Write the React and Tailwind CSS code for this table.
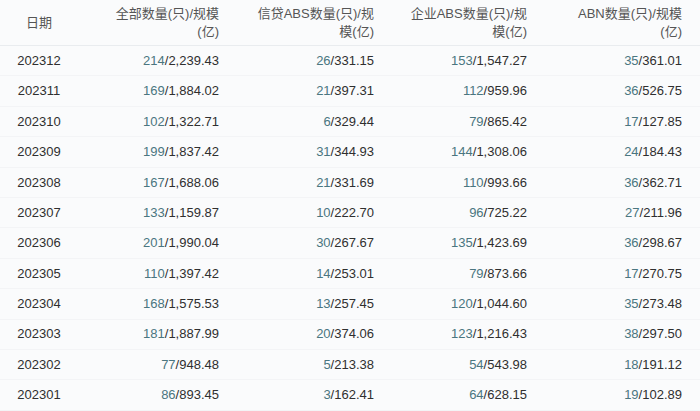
const rows = [
  ["202312", "214", "2,239.43", "26", "331.15", "153", "1,547.27", "35", "361.01"],
  ["202311", "169", "1,884.02", "21", "397.31", "112", "959.96", "36", "526.75"],
  ["202310", "102", "1,322.71", "6", "329.44", "79", "865.42", "17", "127.85"],
  ["202309", "199", "1,837.42", "31", "344.93", "144", "1,308.06", "24", "184.43"],
  ["202308", "167", "1,688.06", "21", "331.69", "110", "993.66", "36", "362.71"],
  ["202307", "133", "1,159.87", "10", "222.70", "96", "725.22", "27", "211.96"],
  ["202306", "201", "1,990.04", "30", "267.67", "135", "1,423.69", "36", "298.67"],
  ["202305", "110", "1,397.42", "14", "253.01", "79", "873.66", "17", "270.75"],
  ["202304", "168", "1,575.53", "13", "257.45", "120", "1,044.60", "35", "273.48"],
  ["202303", "181", "1,887.99", "20", "374.06", "123", "1,216.43", "38", "297.50"],
  ["202302", "77", "948.48", "5", "213.38", "54", "543.98", "18", "191.12"],
  ["202301", "86", "893.45", "3", "162.41", "64", "628.15", "19", "102.89"],
];

const grid = "grid grid-cols-[78px_153px_155px_153px_161px]";

function Cell({ n, v, last }) {
  return (
    <div className={"text-right " + (last ? "pr-[18px]" : "pr-3")}>
      <span className="text-[#4a7680]">{n}</span>
      <span>/{v}</span>
    </div>
  );
}

export default function App() {
  return (
    <div
      className="w-[700px] h-[411px] overflow-hidden bg-[#fafbfc] text-[13px] text-[#2f2f2f]"
      style={{ fontFamily: '"Liberation Sans", "Noto Sans CJK SC", sans-serif' }}
    >
      <div className={grid + " h-[46px] items-center border-b border-[#e9ecef] text-[#555] leading-[18px]"}>
        <div className="text-center">日期</div>
        <div className="text-right pr-3">全部数量(只)/规模<br />(亿)</div>
        <div className="text-right pr-3">信贷ABS数量(只)/规<br />模(亿)</div>
        <div className="text-right pr-3">企业ABS数量(只)/规<br />模(亿)</div>
        <div className="text-right pr-[18px]">ABN数量(只)/规模<br />(亿)</div>
      </div>
      {rows.map((r) => (
        <div key={r[0]} className={grid + " h-[30.4px] items-center border-b border-[#f3f4f6]"}>
          <div className="text-center">{r[0]}</div>
          <Cell n={r[1]} v={r[2]} />
          <Cell n={r[3]} v={r[4]} />
          <Cell n={r[5]} v={r[6]} />
          <Cell n={r[7]} v={r[8]} last />
        </div>
      ))}
    </div>
  );
}
